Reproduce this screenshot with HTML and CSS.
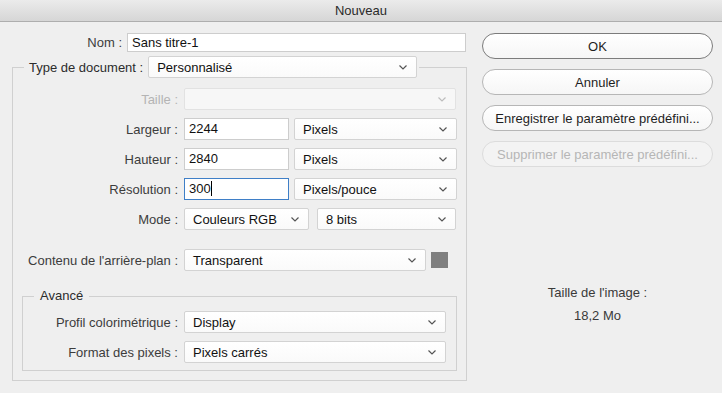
FILE: index.html
```html
<!DOCTYPE html>
<html lang="fr">
<head>
    <meta charset="UTF-8">
    <meta name="viewport" content="width=device-width, initial-scale=1.0">
    <title>Nouveau</title>
    <link rel="stylesheet" href="styles.css">
</head>
<body>

    <!-- Window title bar -->
    <div class="title-bar">Nouveau</div>

    <div class="dialog">
        <!-- Left side: document settings -->
        <div class="settings">
            <div class="row name-row">
                <label class="label name-label">Nom :</label>
                <div class="input name-input">Sans titre-1</div>
            </div>

            <fieldset class="group">
                <legend class="group-legend">
                    <span class="legend-label">Type de document :</span>
                    <div class="select type-select">
                        <span>Personnalisé</span>
                        <svg class="chevron" width="8" height="5" viewBox="0 0 8 5"><polyline points="0.5,0.5 4,4 7.5,0.5" /></svg>
                    </div>
                </legend>

                <div class="row">
                    <label class="label disabled">Taille :</label>
                    <div class="select disabled w-full">
                        <span></span>
                        <svg class="chevron" width="8" height="5" viewBox="0 0 8 5"><polyline points="0.5,0.5 4,4 7.5,0.5" /></svg>
                    </div>
                </div>

                <div class="row">
                    <label class="label">Largeur :</label>
                    <div class="input w-num">2244</div>
                    <div class="select w-unit">
                        <span>Pixels</span>
                        <svg class="chevron" width="8" height="5" viewBox="0 0 8 5"><polyline points="0.5,0.5 4,4 7.5,0.5" /></svg>
                    </div>
                </div>

                <div class="row">
                    <label class="label">Hauteur :</label>
                    <div class="input w-num">2840</div>
                    <div class="select w-unit">
                        <span>Pixels</span>
                        <svg class="chevron" width="8" height="5" viewBox="0 0 8 5"><polyline points="0.5,0.5 4,4 7.5,0.5" /></svg>
                    </div>
                </div>

                <div class="row">
                    <label class="label">Résolution :</label>
                    <div class="input w-num focused">300<span class="caret"></span></div>
                    <div class="select w-unit">
                        <span>Pixels/pouce</span>
                        <svg class="chevron" width="8" height="5" viewBox="0 0 8 5"><polyline points="0.5,0.5 4,4 7.5,0.5" /></svg>
                    </div>
                </div>

                <div class="row">
                    <label class="label">Mode :</label>
                    <div class="select w-mode">
                        <span>Couleurs RGB</span>
                        <svg class="chevron" width="8" height="5" viewBox="0 0 8 5"><polyline points="0.5,0.5 4,4 7.5,0.5" /></svg>
                    </div>
                    <div class="select w-bits">
                        <span>8 bits</span>
                        <svg class="chevron" width="8" height="5" viewBox="0 0 8 5"><polyline points="0.5,0.5 4,4 7.5,0.5" /></svg>
                    </div>
                </div>

                <div class="row background-row">
                    <label class="label">Contenu de l'arrière-plan :</label>
                    <div class="select w-bg">
                        <span>Transparent</span>
                        <svg class="chevron" width="8" height="5" viewBox="0 0 8 5"><polyline points="0.5,0.5 4,4 7.5,0.5" /></svg>
                    </div>
                    <div class="swatch"></div>
                </div>

                <!-- Advanced options -->
                <fieldset class="group advanced">
                    <legend class="group-legend small-legend">Avancé</legend>

                    <div class="row">
                        <label class="label">Profil colorimétrique :</label>
                        <div class="select w-adv">
                            <span>Display</span>
                            <svg class="chevron" width="8" height="5" viewBox="0 0 8 5"><polyline points="0.5,0.5 4,4 7.5,0.5" /></svg>
                        </div>
                    </div>

                    <div class="row">
                        <label class="label">Format des pixels :</label>
                        <div class="select w-adv">
                            <span>Pixels carrés</span>
                            <svg class="chevron" width="8" height="5" viewBox="0 0 8 5"><polyline points="0.5,0.5 4,4 7.5,0.5" /></svg>
                        </div>
                    </div>
                </fieldset>
            </fieldset>
        </div>

        <!-- Right side: buttons and image size -->
        <div class="actions">
            <button class="btn btn-default">OK</button>
            <button class="btn">Annuler</button>
            <button class="btn">Enregistrer le paramètre prédéfini...</button>
            <button class="btn" disabled>Supprimer le paramètre prédéfini...</button>

            <div class="image-size">
                <div>Taille de l'image :</div>
                <div class="size-value">18,2 Mo</div>
            </div>
        </div>
    </div>

</body>
</html>
```

FILE: styles.css
```css
body {
    font-family: "Liberation Sans", Arial, sans-serif;
    font-size: 13px;
    color: #333;
    margin: 0;
    padding: 0;
    width: 722px;
    height: 393px;
    background-color: #efefef;
    overflow: hidden;
}

.title-bar {
    height: 21px;
    line-height: 21px;
    text-align: center;
    color: #2a2a2a;
    background: linear-gradient(#ebebeb, #d6d6d6);
    border-bottom: 1px solid #aeaeae;
}

.dialog {
    display: flex;
    padding-top: 11px;
}

/* Left column */
.settings {
    width: 455px;
    margin-left: 12px;
}

.row {
    display: flex;
    align-items: center;
    gap: 6px;
    height: 22px;
    margin-bottom: 8px;
}

.row:last-child {
    margin-bottom: 0;
}

.label {
    width: 165px;
    flex-shrink: 0;
    text-align: right;
    color: #3c3c3c;
    white-space: nowrap;
}

.label.disabled {
    color: #b4b4b4;
}

.name-row {
    height: 19px;
    gap: 5px;
    margin-bottom: 4px;
}

.name-label {
    width: 110px;
}

.input {
    box-sizing: border-box;
    height: 22px;
    line-height: 20px;
    padding: 0 4px;
    background-color: #fff;
    border: 1px solid #cdcdcd;
    color: #111;
    white-space: nowrap;
}

.name-input {
    width: 339px;
    height: 19px;
    line-height: 17px;
}

.input.focused {
    border-color: #3f7fc7;
}

.caret {
    display: inline-block;
    width: 1px;
    height: 15px;
    background-color: #000;
    vertical-align: -3px;
}

.select {
    box-sizing: border-box;
    height: 22px;
    display: flex;
    align-items: center;
    justify-content: space-between;
    padding: 0 9px 0 8px;
    background: linear-gradient(#ffffff, #fafafa);
    border: 1px solid #d3d3d3;
    border-radius: 2px;
    color: #111;
    white-space: nowrap;
}

.select.disabled {
    background: #f7f7f7;
    border-color: #e2e2e2;
}

.chevron {
    flex-shrink: 0;
    fill: none;
    stroke: #555;
    stroke-width: 1.2;
}

.select.disabled .chevron {
    stroke: #bdbdbd;
}

.w-full { width: 272px; }
.w-num { width: 105px; }
.w-unit { width: 163px; margin-left: -1px; }
.w-mode { width: 125px; }
.w-bits { width: 139px; margin-left: 2px; }
.w-bg { width: 242px; }
.w-adv { width: 262px; }
.type-select { width: 269px; }

.swatch {
    width: 17px;
    height: 16px;
    margin-left: -1px;
    background-color: #7f7f7f;
}

/* Grouped boxes */
.group {
    margin: 0;
    padding: 10px 0 8px 0;
    border: 1px solid #d0d0d0;
    min-width: 0;
}

.group-legend {
    display: flex;
    align-items: center;
    gap: 5px;
    margin-left: 11px;
    padding: 0 2px 0 5px;
    color: #2c2c2c;
}

.settings > .group {
    padding-bottom: 9px;
}

.background-row {
    margin-top: 19px;
}

.advanced {
    margin: 17px 9px 0 9px;
    padding: 7px 0 7px 0;
}

.advanced .label {
    width: 155px;
}

.small-legend {
    padding: 0 6px;
    line-height: 16px;
}

/* Right column */
.actions {
    width: 231px;
    margin-left: 15px;
    display: flex;
    flex-direction: column;
    gap: 10px;
}

.btn {
    font-family: inherit;
    font-size: 13px;
    height: 26px;
    border-radius: 13px;
    border: 1px solid #b6b6b6;
    background: linear-gradient(#ffffff, #f6f6f6);
    color: #1e1e1e;
    padding: 0;
    cursor: pointer;
}

.btn-default {
    border-color: #7c7c7c;
}

.btn:disabled {
    border-color: #dcdcdc;
    background: #f3f3f3;
    color: #b6b6b6;
    cursor: default;
}

.image-size {
    margin-top: 108px;
    text-align: center;
    color: #3a3a3a;
}

.size-value {
    margin-top: 8px;
}
```
